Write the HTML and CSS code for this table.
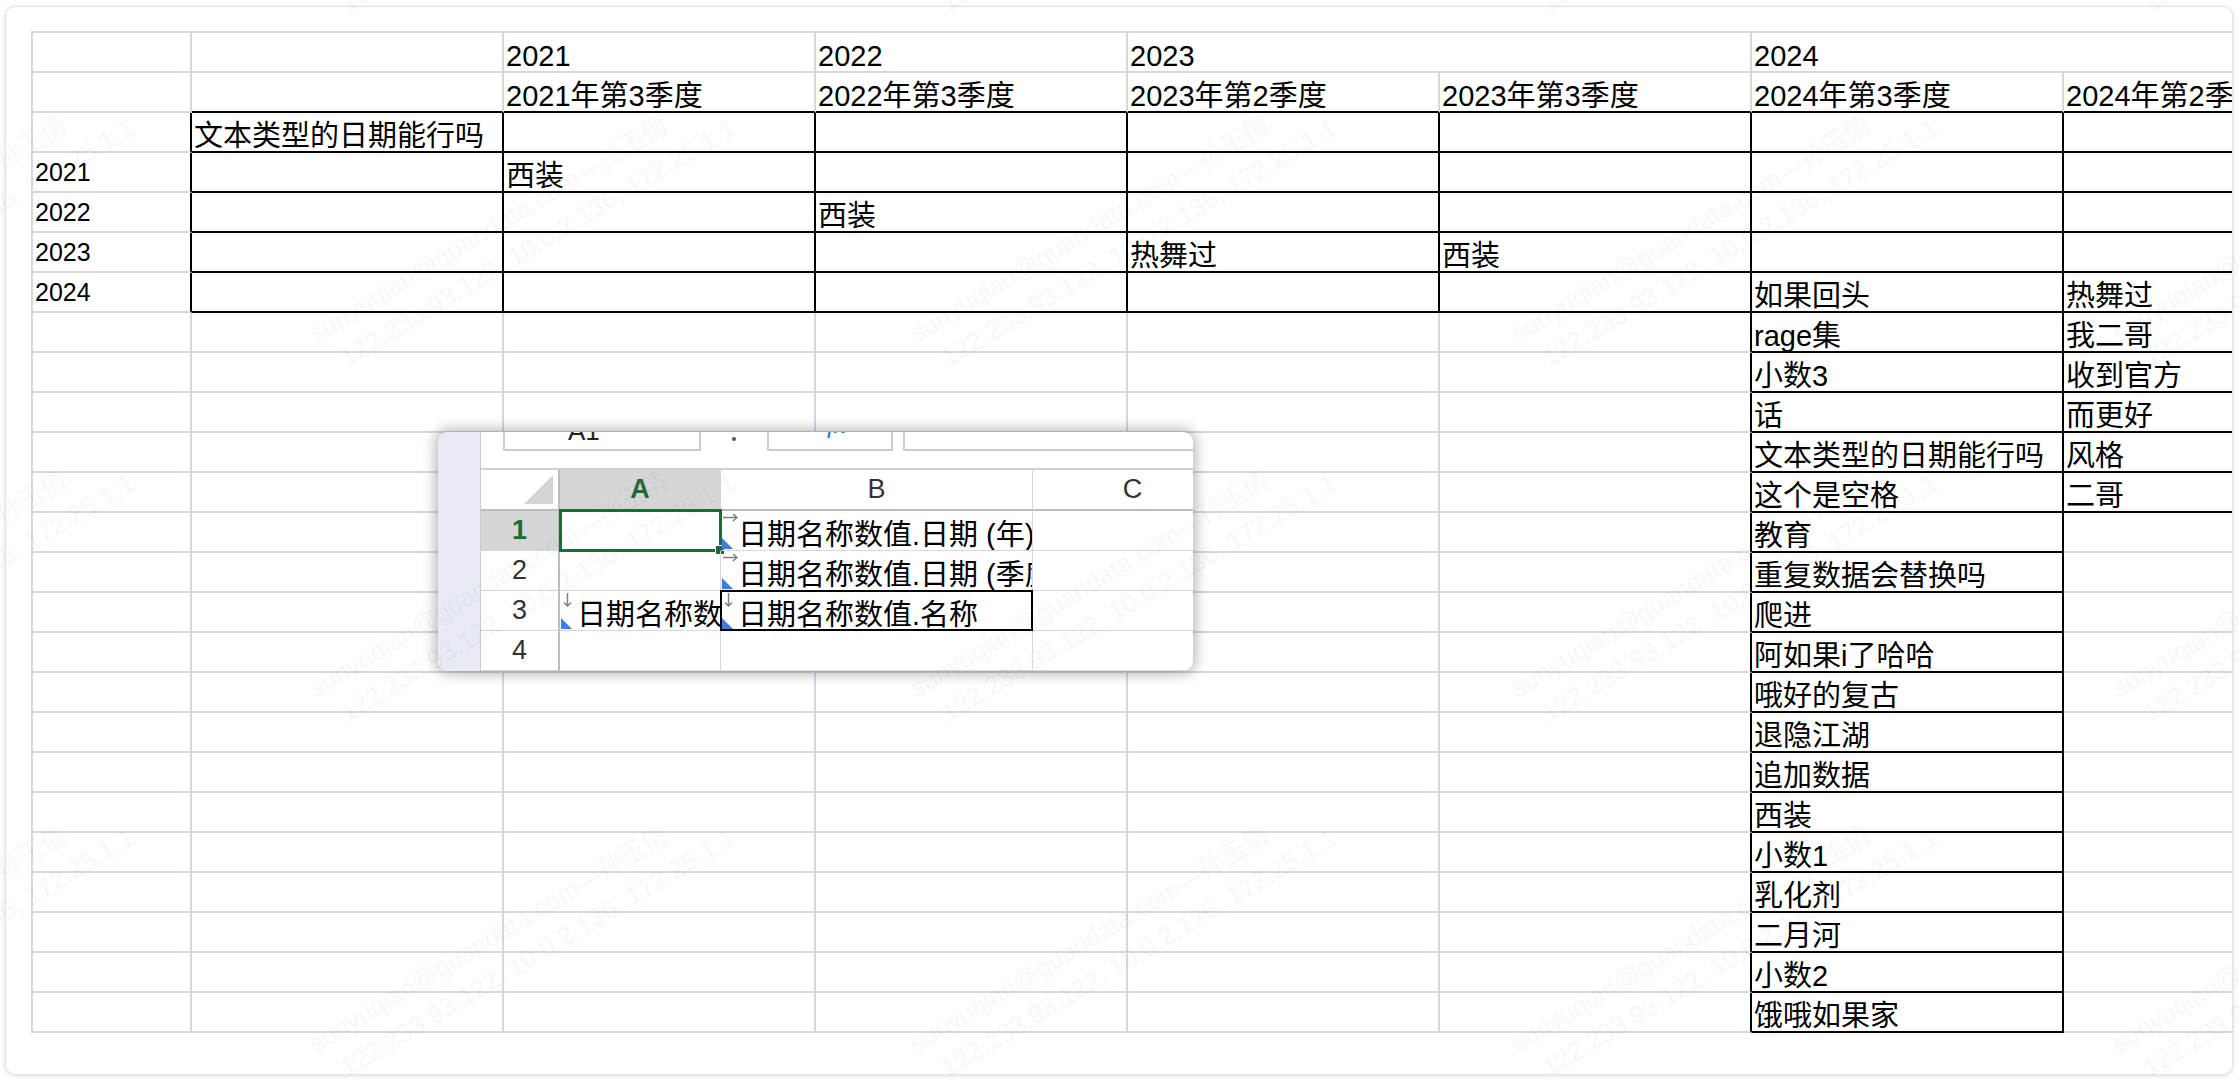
FILE: index.html
```html
<!DOCTYPE html>
<html lang="zh-CN">
<head>
<meta charset="utf-8">
<title>Sheet preview</title>
<link rel="stylesheet" href="styles.css">
</head>
<body>
<div class="card">
  <div class="sheet">
    <!-- row 1 -->
    <div class="c"></div><div class="c"></div><div class="c">2021</div><div class="c">2022</div><div class="c span2">2023</div><div class="c span2">2024</div>
    <!-- row 2 -->
    <div class="c"></div><div class="c kb"></div><div class="c kb">2021年第3季度</div><div class="c kb">2022年第3季度</div><div class="c kb">2023年第2季度</div><div class="c kb">2023年第3季度</div><div class="c kb">2024年第3季度</div><div class="c kb">2024年第2季度</div>
    <!-- row 3 -->
    <div class="c kr"></div><div class="c kb kr">文本类型的日期能行吗</div><div class="c kb kr"></div><div class="c kb kr"></div><div class="c kb kr"></div><div class="c kb kr"></div><div class="c kb kr"></div><div class="c kb kr"></div>
    <!-- row 4 -->
    <div class="c kr lab">2021</div><div class="c kb kr"></div><div class="c kb kr">西装</div><div class="c kb kr"></div><div class="c kb kr"></div><div class="c kb kr"></div><div class="c kb kr"></div><div class="c kb kr"></div>
    <!-- row 5 -->
    <div class="c kr lab">2022</div><div class="c kb kr"></div><div class="c kb kr"></div><div class="c kb kr">西装</div><div class="c kb kr"></div><div class="c kb kr"></div><div class="c kb kr"></div><div class="c kb kr"></div>
    <!-- row 6 -->
    <div class="c kr lab">2023</div><div class="c kb kr"></div><div class="c kb kr"></div><div class="c kb kr"></div><div class="c kb kr">热舞过</div><div class="c kb kr">西装</div><div class="c kb kr"></div><div class="c kb kr"></div>
    <!-- row 7 -->
    <div class="c kr lab">2024</div><div class="c kb kr"></div><div class="c kb kr"></div><div class="c kb kr"></div><div class="c kb kr"></div><div class="c kb kr"></div><div class="c kb kr">如果回头</div><div class="c kb kr">热舞过</div>
    <!-- rows 8-12 -->
    <div class="c"></div><div class="c"></div><div class="c"></div><div class="c"></div><div class="c"></div><div class="c kr"></div><div class="c kb kr">rage集</div><div class="c kb">我二哥</div>
    <div class="c"></div><div class="c"></div><div class="c"></div><div class="c"></div><div class="c"></div><div class="c kr"></div><div class="c kb kr">小数3</div><div class="c kb">收到官方</div>
    <div class="c"></div><div class="c"></div><div class="c"></div><div class="c"></div><div class="c"></div><div class="c kr"></div><div class="c kb kr">话</div><div class="c kb">而更好</div>
    <div class="c"></div><div class="c"></div><div class="c"></div><div class="c"></div><div class="c"></div><div class="c kr"></div><div class="c kb kr">文本类型的日期能行吗</div><div class="c kb">风格</div>
    <div class="c"></div><div class="c"></div><div class="c"></div><div class="c"></div><div class="c"></div><div class="c kr"></div><div class="c kb kr">这个是空格</div><div class="c kb">二哥</div>
    <!-- rows 13-25 -->
    <div class="c"></div><div class="c"></div><div class="c"></div><div class="c"></div><div class="c"></div><div class="c kr"></div><div class="c kb kr">教育</div><div class="c"></div>
    <div class="c"></div><div class="c"></div><div class="c"></div><div class="c"></div><div class="c"></div><div class="c kr"></div><div class="c kb kr">重复数据会替换吗</div><div class="c"></div>
    <div class="c"></div><div class="c"></div><div class="c"></div><div class="c"></div><div class="c"></div><div class="c kr"></div><div class="c kb kr">爬进</div><div class="c"></div>
    <div class="c"></div><div class="c"></div><div class="c"></div><div class="c"></div><div class="c"></div><div class="c kr"></div><div class="c kb kr">阿如果i了哈哈</div><div class="c"></div>
    <div class="c"></div><div class="c"></div><div class="c"></div><div class="c"></div><div class="c"></div><div class="c kr"></div><div class="c kb kr">哦好的复古</div><div class="c"></div>
    <div class="c"></div><div class="c"></div><div class="c"></div><div class="c"></div><div class="c"></div><div class="c kr"></div><div class="c kb kr">退隐江湖</div><div class="c"></div>
    <div class="c"></div><div class="c"></div><div class="c"></div><div class="c"></div><div class="c"></div><div class="c kr"></div><div class="c kb kr">追加数据</div><div class="c"></div>
    <div class="c"></div><div class="c"></div><div class="c"></div><div class="c"></div><div class="c"></div><div class="c kr"></div><div class="c kb kr">西装</div><div class="c"></div>
    <div class="c"></div><div class="c"></div><div class="c"></div><div class="c"></div><div class="c"></div><div class="c kr"></div><div class="c kb kr">小数1</div><div class="c"></div>
    <div class="c"></div><div class="c"></div><div class="c"></div><div class="c"></div><div class="c"></div><div class="c kr"></div><div class="c kb kr">乳化剂</div><div class="c"></div>
    <div class="c"></div><div class="c"></div><div class="c"></div><div class="c"></div><div class="c"></div><div class="c kr"></div><div class="c kb kr">二月河</div><div class="c"></div>
    <div class="c"></div><div class="c"></div><div class="c"></div><div class="c"></div><div class="c"></div><div class="c kr"></div><div class="c kb kr">小数2</div><div class="c"></div>
    <div class="c"></div><div class="c"></div><div class="c"></div><div class="c"></div><div class="c"></div><div class="c kr"></div><div class="c kb kr">饿哦如果家</div><div class="c"></div>
  </div>
</div>

<div class="popup">
  <div class="pside"></div>
  <div class="pmain">
    <div class="tbar">
      <div class="nbox">A1</div>
      <div class="tdot"></div>
      <div class="fxbox"><span class="fx">fx</span></div>
      <div class="fbox"></div>
    </div>
    <div class="xg">
      <div class="xh xcorner"><svg class="ctri" width="30" height="30" viewBox="0 0 30 30"><polygon points="0,29 29,0 29,29" fill="#d4d4d4"/></svg></div>
      <div class="xh sel">A</div>
      <div class="xh">B</div>
      <div class="xh">C</div>

      <div class="xr sel">1</div>
      <div class="xc"><div class="selbox"></div><div class="handle"></div></div>
      <div class="xc">
        <svg class="arr-r" width="16" height="9" viewBox="0 0 16 9"><path d="M0 4.5H14M10 1L14 4.5L10 8" fill="none" stroke="#7d7d7d" stroke-width="1.4"/></svg>
        <span class="tri"></span><span class="xt">日期名称数值.日期 (年)</span>
      </div>
      <div class="xc"></div>

      <div class="xr">2</div>
      <div class="xc"></div>
      <div class="xc">
        <svg class="arr-r" width="16" height="9" viewBox="0 0 16 9"><path d="M0 4.5H14M10 1L14 4.5L10 8" fill="none" stroke="#7d7d7d" stroke-width="1.4"/></svg>
        <span class="tri"></span><span class="xt">日期名称数值.日期 (季度)</span>
      </div>
      <div class="xc"></div>

      <div class="xr">3</div>
      <div class="xc">
        <svg class="arr-d" width="9" height="15" viewBox="0 0 9 15"><path d="M4.5 0V13M1 9.5L4.5 13L8 9.5" fill="none" stroke="#7d7d7d" stroke-width="1.4"/></svg>
        <span class="tri"></span><span class="xt">日期名称数值.名称</span>
      </div>
      <div class="xc boxed">
        <svg class="arr-d" width="9" height="15" viewBox="0 0 9 15"><path d="M4.5 0V13M1 9.5L4.5 13L8 9.5" fill="none" stroke="#7d7d7d" stroke-width="1.4"/></svg>
        <span class="tri"></span><span class="xt">日期名称数值.名称</span>
      </div>
      <div class="xc"></div>

      <div class="xr">4</div>
      <div class="xc"></div>
      <div class="xc"></div>
      <div class="xc"></div>
    </div>
  </div>
</div>

<div class="wm-layer">
  <div class="wm-grid">
    <div class="wm"><span>sunyuqian@guandata.com—孙玉倩</span><span>122.233.93.122, 10.0.2.136, 172.25.1.1</span></div>
    <div class="wm"><span>sunyuqian@guandata.com—孙玉倩</span><span>122.233.93.122, 10.0.2.136, 172.25.1.1</span></div>
    <div class="wm"><span>sunyuqian@guandata.com—孙玉倩</span><span>122.233.93.122, 10.0.2.136, 172.25.1.1</span></div>
    <div class="wm"><span>sunyuqian@guandata.com—孙玉倩</span><span>122.233.93.122, 10.0.2.136, 172.25.1.1</span></div>
    <div class="wm"><span>sunyuqian@guandata.com—孙玉倩</span><span>122.233.93.122, 10.0.2.136, 172.25.1.1</span></div>
    <div class="wm"><span>sunyuqian@guandata.com—孙玉倩</span><span>122.233.93.122, 10.0.2.136, 172.25.1.1</span></div>
    <div class="wm"><span>sunyuqian@guandata.com—孙玉倩</span><span>122.233.93.122, 10.0.2.136, 172.25.1.1</span></div>
    <div class="wm"><span>sunyuqian@guandata.com—孙玉倩</span><span>122.233.93.122, 10.0.2.136, 172.25.1.1</span></div>
    <div class="wm"><span>sunyuqian@guandata.com—孙玉倩</span><span>122.233.93.122, 10.0.2.136, 172.25.1.1</span></div>
    <div class="wm"><span>sunyuqian@guandata.com—孙玉倩</span><span>122.233.93.122, 10.0.2.136, 172.25.1.1</span></div>
    <div class="wm"><span>sunyuqian@guandata.com—孙玉倩</span><span>122.233.93.122, 10.0.2.136, 172.25.1.1</span></div>
    <div class="wm"><span>sunyuqian@guandata.com—孙玉倩</span><span>122.233.93.122, 10.0.2.136, 172.25.1.1</span></div>
    <div class="wm"><span>sunyuqian@guandata.com—孙玉倩</span><span>122.233.93.122, 10.0.2.136, 172.25.1.1</span></div>
    <div class="wm"><span>sunyuqian@guandata.com—孙玉倩</span><span>122.233.93.122, 10.0.2.136, 172.25.1.1</span></div>
    <div class="wm"><span>sunyuqian@guandata.com—孙玉倩</span><span>122.233.93.122, 10.0.2.136, 172.25.1.1</span></div>
    <div class="wm"><span>sunyuqian@guandata.com—孙玉倩</span><span>122.233.93.122, 10.0.2.136, 172.25.1.1</span></div>
    <div class="wm"><span>sunyuqian@guandata.com—孙玉倩</span><span>122.233.93.122, 10.0.2.136, 172.25.1.1</span></div>
    <div class="wm"><span>sunyuqian@guandata.com—孙玉倩</span><span>122.233.93.122, 10.0.2.136, 172.25.1.1</span></div>
    <div class="wm"><span>sunyuqian@guandata.com—孙玉倩</span><span>122.233.93.122, 10.0.2.136, 172.25.1.1</span></div>
    <div class="wm"><span>sunyuqian@guandata.com—孙玉倩</span><span>122.233.93.122, 10.0.2.136, 172.25.1.1</span></div>
  </div>
</div>
</body>
</html>
```

FILE: styles.css
```css
* { box-sizing: border-box; margin: 0; padding: 0; }
html, body { background: #fff; }
body {
  width: 2240px;
  height: 1082px;
  position: relative;
  overflow: hidden;
  font-family: "Liberation Sans", "Noto Sans CJK SC", sans-serif;
  color: #000;
}

/* card */
.card {
  margin: 6px 0 0 5px;
  width: 2228px;
  height: 1069px;
  border: 1px solid #e3e3e3;
  border-radius: 10px;
  box-shadow: 0 1px 5px rgba(0, 0, 0, .12);
  padding: 24px 0 0 25px;
  overflow: hidden;
  background: #fff;
}

/* main sheet grid */
.sheet {
  display: grid;
  grid-template-columns: 159px repeat(7, 312px);
  grid-auto-rows: 40px;
  border-top: 2px solid #d5d9de;
  border-left: 2px solid #d5d9de;
  width: max-content;
}
.c {
  border-right: 2px solid #d5d9de;
  border-bottom: 2px solid #d5d9de;
  font-size: 29px;
  line-height: 30px;
  padding-left: 2px;
  display: flex;
  align-items: flex-end;
  white-space: nowrap;
  overflow: hidden;
}
.kb { border-bottom-color: #000; }
.kr { border-right-color: #000; }
.lab { font-size: 25px; align-items: center; }
.span2 { grid-column: span 2; }

/* excel popup */
.popup {
  position: absolute;
  left: 438px;
  top: 432px;
  width: 755px;
  height: 239px;
  border-radius: 10px;
  overflow: hidden;
  background: #fff;
  box-shadow: 0 0 14px 2px rgba(0, 0, 0, .32);
  display: flex;
  z-index: 5;
}
.pside {
  flex: none;
  width: 43px;
  background: #e8ebf4;
  border-right: 1px solid #c8ccd4;
}
.pmain {
  flex: 1;
  min-width: 0;
  display: flex;
  flex-direction: column;
}
.tbar {
  flex: none;
  height: 38px;
  border-bottom: 2px solid #d0d0d0;
  display: flex;
  align-items: flex-start;
}
.nbox {
  margin: -17px 0 0 22px;
  width: 198px;
  height: 36px;
  border: 2px solid #cbcbcb;
  font-size: 26px;
  line-height: 28px;
  padding-left: 63px;
  color: #222;
}
.tdot {
  margin: 5px 0 0 31px;
  width: 4px;
  height: 4px;
  border-radius: 50%;
  background: #555;
}
.fxbox {
  margin: -17px 0 0 31px;
  width: 126px;
  height: 36px;
  border: 2px solid #cbcbcb;
  padding-left: 58px;
  overflow: hidden;
}
.fx {
  display: block;
  margin-top: -5px;
  font-family: "Liberation Serif", serif;
  font-style: italic;
  font-size: 26px;
  line-height: 26px;
  color: #2f6fd6;
}
.fbox {
  margin: -17px 0 0 10px;
  flex: 1;
  height: 36px;
  border: 2px solid #cbcbcb;
  border-right: none;
}

.xg {
  display: grid;
  grid-template-columns: 79px 161px 312px 200px;
  grid-template-rows: 41px repeat(4, 40px);
}
.xh {
  border-right: 1px solid #d6d6d6;
  border-bottom: 2px solid #bdbdbd;
  font-size: 27px;
  color: #333;
  display: flex;
  align-items: center;
  justify-content: center;
}
.xcorner {
  border-right: 2px solid #bdbdbd;
  position: relative;
}
.ctri { position: absolute; right: 4px; bottom: 4px; }
.xh.sel, .xr.sel {
  background: #d6d6d6;
  color: #1d6b38;
  font-weight: bold;
}
.xr {
  border-right: 2px solid #bdbdbd;
  border-bottom: 1px solid #d6d6d6;
  font-size: 27px;
  color: #333;
  display: flex;
  align-items: center;
  justify-content: center;
}
.xc {
  position: relative;
  border-right: 1px solid #d9d9d9;
  border-bottom: 1px solid #d9d9d9;
  font-size: 29px;
  line-height: 30px;
  padding-left: 17px;
  display: flex;
  align-items: flex-end;
  white-space: nowrap;
}
.xt {
  flex: 1;
  min-width: 0;
  overflow: hidden;
}
.selbox {
  position: absolute;
  left: -1px;
  top: -2px;
  right: -2px;
  bottom: -2px;
  border: 3px solid #1d6b38;
}
.handle {
  position: absolute;
  right: -5px;
  bottom: -5px;
  width: 10px;
  height: 10px;
  background: #1d6b38;
  border: 1px solid #fff;
}
.boxed::after {
  content: "";
  position: absolute;
  left: -1px;
  top: -1px;
  right: -1px;
  bottom: -1px;
  border: 2px solid #000;
}
.arr-r { position: absolute; left: 2px; top: 2px; }
.arr-d { position: absolute; left: 3px; top: 2px; }
.tri {
  position: absolute;
  left: 1px;
  bottom: 1px;
  width: 0;
  height: 0;
  border-left: 11px solid #3b7de4;
  border-top: 11px solid transparent;
}

/* watermark */
.wm-layer {
  position: absolute;
  left: 0;
  top: 0;
  width: 2240px;
  height: 1082px;
  overflow: hidden;
  pointer-events: none;
  z-index: 20;
}
.wm-grid {
  display: grid;
  grid-template-columns: repeat(5, 601px);
  grid-auto-rows: 355px;
  margin: -35px 0 0 -299px;
}
.wm {
  transform-origin: 0 0;
  transform: rotate(-31deg);
  font-size: 26px;
  line-height: 37px;
  color: rgba(0, 0, 0, .055);
  white-space: nowrap;
}
.wm span { display: block; }
.wm span + span { padding-left: 14px; }
```
